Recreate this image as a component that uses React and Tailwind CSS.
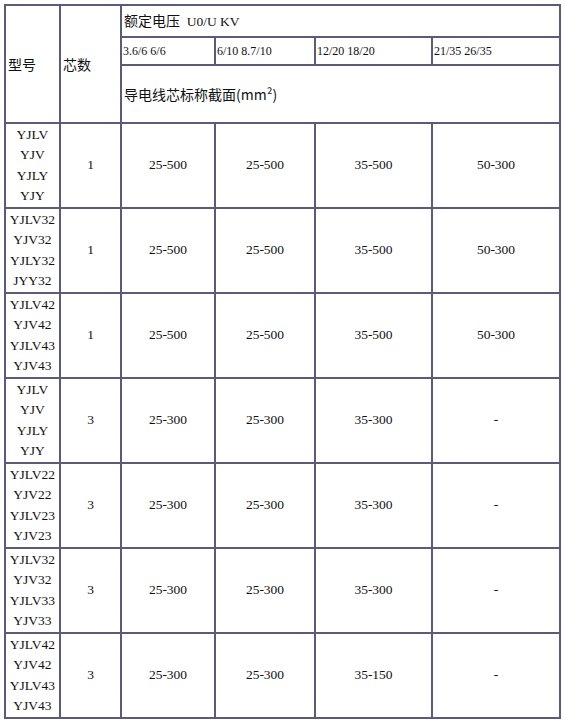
const rows = [
  { models: ["YJLV", "YJV", "YJLY", "YJY"], cores: "1", vals: ["25-500", "25-500", "35-500", "50-300"] },
  { models: ["YJLV32", "YJV32", "YJLY32", "JYY32"], cores: "1", vals: ["25-500", "25-500", "35-500", "50-300"] },
  { models: ["YJLV42", "YJV42", "YJLV43", "YJV43"], cores: "1", vals: ["25-500", "25-500", "35-500", "50-300"] },
  { models: ["YJLV", "YJV", "YJLY", "YJY"], cores: "3", vals: ["25-300", "25-300", "35-300", "-"] },
  { models: ["YJLV22", "YJV22", "YJLV23", "YJV23"], cores: "3", vals: ["25-300", "25-300", "35-300", "-"] },
  { models: ["YJLV32", "YJV32", "YJLV33", "YJV33"], cores: "3", vals: ["25-300", "25-300", "35-300", "-"] },
  { models: ["YJLV42", "YJV42", "YJLV43", "YJV43"], cores: "3", vals: ["25-300", "25-300", "35-150", "-"] },
];

const serif = { fontFamily: '"Liberation Serif", "Noto Sans CJK SC", serif' };
const cell = "border-2 border-[#5d5a78] p-0";
const cjk = "font-['Noto_Sans_CJK_SC',sans-serif] text-[14px]";

export default function App() {
  return (
    <div className="bg-white w-[565px] h-[726px] pt-[4px] pl-[4px] text-[#111]" style={serif}>
      <table className="table-fixed border-collapse w-[557px] text-[13.5px]">
        <colgroup>
          <col className="w-[55px]" />
          <col className="w-[61px]" />
          <col className="w-[94px]" />
          <col className="w-[100px]" />
          <col className="w-[117px]" />
          <col className="w-[128px]" />
        </colgroup>
        <thead>
          <tr className="h-[32px]">
            <th rowSpan={3} className={`${cell} ${cjk} text-left font-normal pl-[2px]`}>型号</th>
            <th rowSpan={3} className={`${cell} ${cjk} text-left font-normal pl-[2px]`}>芯数</th>
            <th colSpan={4} className={`${cell} text-left font-normal pl-[2px]`}>
              <span className={cjk}>额定电压</span>
              <span>{"\u00a0 U0/U KV"}</span>
            </th>
          </tr>
          <tr className="h-[28px] text-[12px]">
            <th className={`${cell} text-left font-normal pl-[1px]`}>3.6/6 6/6</th>
            <th className={`${cell} text-left font-normal pl-[1px]`}>6/10 8.7/10</th>
            <th className={`${cell} text-left font-normal pl-[1px]`}>12/20 18/20</th>
            <th className={`${cell} text-left font-normal pl-[1px]`}>21/35 26/35</th>
          </tr>
          <tr className="h-[58px]">
            <th colSpan={4} className={`${cell} ${cjk} text-left font-normal pl-[2px]`}>
              导电线芯标称截面(mm²)
            </th>
          </tr>
        </thead>
        <tbody>
          {rows.map((r, i) => (
            <tr key={i} className="h-[85px]">
              <td className={`${cell} text-center leading-[20.5px]`}>
                {r.models.map((m, j) => (
                  <div key={j}>{m}</div>
                ))}
              </td>
              <td className={`${cell} text-center`}>{r.cores}</td>
              {r.vals.map((v, j) => (
                <td key={j} className={`${cell} text-center`}>{v}</td>
              ))}
            </tr>
          ))}
        </tbody>
      </table>
    </div>
  );
}
